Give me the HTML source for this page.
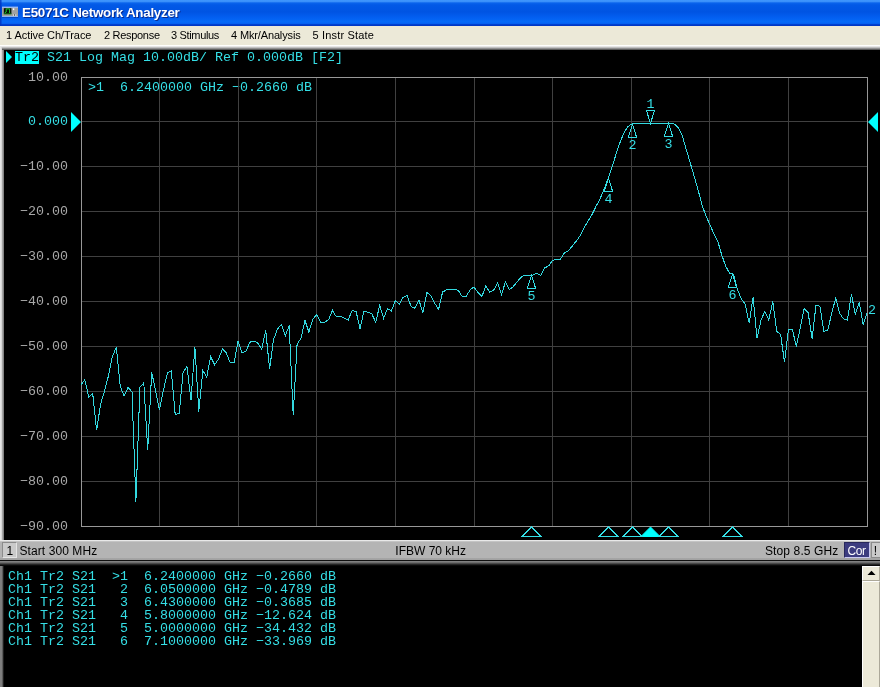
<!DOCTYPE html>
<html><head><meta charset="utf-8"><title>E5071C Network Analyzer</title>
<style>
html,body{margin:0;padding:0;}
body{width:880px;height:687px;overflow:hidden;background:#000;position:relative;font-family:"Liberation Sans",sans-serif;}
.mono,.yl,#menu,#status,#ttext{will-change:transform;}
div{position:absolute;box-sizing:border-box;white-space:pre;}
#title{left:0;top:0;width:880px;height:26px;background:linear-gradient(to bottom,#3f97fd 0px,#3a90fa 1.5px,#0a64ec 3px,#0259e6 5px,#0054e3 12px,#035ef0 17px,#056af8 22px,#0560f0 23.5px,#0040d0 24.5px,#0032c0 26px);}
#title .edge{left:0;top:0;width:2px;height:26px;background:linear-gradient(to right,#0034c0,rgba(0,60,200,0.3));}
#ttext{left:22px;top:4px;color:#fff;font-weight:bold;font-size:13.4px;line-height:18px;text-shadow:1px 1px 0 #0a2a8c;letter-spacing:-0.28px;}
#icon{left:2px;top:7px;width:16px;height:10px;background:#9a9c9a;border:1px solid #a8b4d0;}
#icon i{position:absolute;left:1px;top:1px;width:8px;height:6px;background:#1c241c;display:block;}
#icon b{position:absolute;left:2px;top:3px;width:6px;height:2px;background:#20b028;display:block;}
#icon u{position:absolute;left:11px;top:1px;width:1px;height:2px;background:#f0f0f0;display:block;}
#menu{left:0;top:26px;width:880px;height:19px;background:#ece9d8;font-size:11px;color:#000;}
#menu span{position:absolute;top:3px;line-height:13px;}
#sep{left:0;top:45px;width:880px;height:2px;background:linear-gradient(to bottom,#fffffa 0px,#ffffff 1px,#e8e8e8 1px,#e2e2e2 2px);}
#sep2{left:2px;top:47px;width:878px;height:3px;background:linear-gradient(to bottom,#d0d0d0 0px,#b0b0b0 1px,#9a9a9a 1px,#888 2px,#707070 2px,#4c4c4c 3px);}
#lb{left:0;top:47px;width:4px;height:513px;background:linear-gradient(to right,#e6e6e6 0px,#e6e6e6 1px,#dadada 1px,#d4d4d4 2px,#a8a8a8 2px,#a0a0a0 3px,#8a8a8a 3px,#7c7c7c 4px);}
.mono{font-family:"Liberation Mono",monospace;font-size:13.33px;line-height:14px;color:#35dfe6;letter-spacing:0px;}
.yl{left:0;width:68px;text-align:right;font-family:"Liberation Mono",monospace;font-size:13.33px;line-height:14px;color:#a8a8a8;}
.yl.cy{color:#35dfe6;}
#lb2{left:0;top:562px;width:4px;height:125px;background:linear-gradient(to right,#808080 0px,#7c7c7c 2px,#303030 3.2px,#000 4px);}
#hl{left:15px;top:51px;width:24px;height:13px;background:#00ffff;}
#tline{left:15px;top:51px;}
#tline b{font-weight:normal;color:#000;}
#mread{left:88px;top:81px;}
.row{left:8px;}
#status{left:0;top:540px;width:880px;height:20px;background:linear-gradient(to bottom,#e8e8e8 0px,#e8e8e8 1px,#c4c4c4 1px,#c4c4c4 2px,#b4b4b4 2px,#b4b4b4 17.5px,#a6a6a6 18px,#a0a0a0 20px);font-size:12px;color:#000;}
#status span{position:absolute;top:4px;line-height:14px;}
#sb1,#cor,#exc{will-change:transform;}
#sb1{left:2px;top:542px;width:15px;height:16px;background:#cacaca;border:1px solid #8c8c8c;border-right-color:#e4e4e4;border-bottom-color:#e4e4e4;}
#cor{left:844px;top:542px;width:26px;height:16px;background:#3c3c80;border:1px solid #28285c;border-right-color:#c8c8f0;border-bottom-color:#c8c8f0;}
#exc{left:871px;top:542px;width:12px;height:16px;background:#cacaca;border:1px solid #8c8c8c;}
#ssep{left:0;top:560px;width:880px;height:6px;background:linear-gradient(to bottom,#101010 0px,#101010 1px,#848484 1px,#7c7c7c 2px,#5c5c5c 3px,#343434 4px,#141414 5px,#000 6px);}
#scroll{left:862px;top:581px;width:18px;height:106px;background:#ece9d8;border-left:1px solid #fff;border-top:1px solid #fff;border-right:1px solid #aca899;}
#sbtn{left:862px;top:566px;width:18px;height:15px;background:#ece9d8;border:1px solid #fff;border-right-color:#aca899;border-bottom-color:#aca899;}
svg{position:absolute;left:0;top:0;}
</style></head><body>
<div id="title"><div class="edge"></div><svg width="22" height="22" viewBox="0 0 22 22" style="left:0;top:0"><rect x="2" y="7" width="16" height="10" fill="#a2a2a2"/><rect x="2" y="6.6" width="16" height="1.3" fill="#9cbcf4"/><rect x="2" y="16" width="16" height="1" fill="#8cb4f4"/><rect x="2" y="17" width="16" height="0.6" fill="#0a3cb0"/><rect x="3.8" y="8.2" width="7.6" height="6" fill="#081008"/><path d="M4.6,13 L6.2,12 L6.2,8.9 L9.6,8.9 L9.6,13" fill="none" stroke="#1cc82c" stroke-width="1"/><rect x="3.8" y="13.5" width="7.8" height="0.7" fill="#18a020"/><rect x="12.9" y="8.4" width="1.4" height="1.7" fill="#fff"/><rect x="13" y="14.5" width="1" height="1.2" fill="#ececec"/><rect x="15.2" y="14.5" width="1.1" height="1.2" fill="#ececec"/><rect x="14.3" y="14" width="0.7" height="2" fill="#585858"/></svg><div id="ttext">E5071C Network Analyzer</div></div>
<div id="menu"><span style="left:6px;letter-spacing:-0.06px">1 Active Ch/Trace</span><span style="left:104px;letter-spacing:-0.3px">2 Response</span><span style="left:171px;letter-spacing:-0.34px">3 Stimulus</span><span style="left:231px;letter-spacing:-0.14px">4 Mkr/Analysis</span><span style="left:312.5px;letter-spacing:0.17px">5 Instr State</span></div>
<div id="sep"></div><div id="lb"></div><div id="sep2"></div>
<div id="lb2"></div>
<div id="hl"></div>
<div id="tline" class="mono"><b>Tr2</b> S21 Log Mag 10.00dB/ Ref 0.000dB [F2]</div>
<div class="yl" style="top:71px">10.00</div><div class="yl cy" style="top:115px">0.000</div><div class="yl" style="top:160px">−10.00</div><div class="yl" style="top:205px">−20.00</div><div class="yl" style="top:250px">−30.00</div><div class="yl" style="top:295px">−40.00</div><div class="yl" style="top:340px">−50.00</div><div class="yl" style="top:385px">−60.00</div><div class="yl" style="top:430px">−70.00</div><div class="yl" style="top:475px">−80.00</div><div class="yl" style="top:520px">−90.00</div>
<div id="mread" class="mono">&gt;1  6.2400000 GHz −0.2660 dB</div>
<svg width="880" height="687" viewBox="0 0 880 687">
<g stroke="#404040" stroke-width="1" shape-rendering="crispEdges"><line x1="159.5" y1="77" x2="159.5" y2="526" /><line x1="238.5" y1="77" x2="238.5" y2="526" /><line x1="316.5" y1="77" x2="316.5" y2="526" /><line x1="395.5" y1="77" x2="395.5" y2="526" /><line x1="474.5" y1="77" x2="474.5" y2="526" /><line x1="552.5" y1="77" x2="552.5" y2="526" /><line x1="631.5" y1="77" x2="631.5" y2="526" /><line x1="709.5" y1="77" x2="709.5" y2="526" /><line x1="788.5" y1="77" x2="788.5" y2="526" /><line x1="81" y1="121.5" x2="868" y2="121.5" /><line x1="81" y1="166.5" x2="868" y2="166.5" /><line x1="81" y1="211.5" x2="868" y2="211.5" /><line x1="81" y1="256.5" x2="868" y2="256.5" /><line x1="81" y1="301.5" x2="868" y2="301.5" /><line x1="81" y1="346.5" x2="868" y2="346.5" /><line x1="81" y1="391.5" x2="868" y2="391.5" /><line x1="81" y1="436.5" x2="868" y2="436.5" /><line x1="81" y1="481.5" x2="868" y2="481.5" /></g>
<rect x="81.5" y="77.5" width="786" height="449" fill="none" stroke="#989898" stroke-width="1" shape-rendering="crispEdges"/>
<path d="M6,51 L12,57 L6,63 Z" fill="#00ffff"/>
<path d="M71,112 L81,122 L71,132 Z" fill="#00ffff"/>
<path d="M878,112 L868,122 L878,132 Z" fill="#00ffff"/>
<polyline points="80.9,384.8 84.8,379.8 88.8,397.2 92.7,393.5 96.6,430.4 100.6,404.0 104.5,391.0 108.4,376.0 112.3,357.0 116.3,347.2 120.2,386.0 124.1,396.2 128.1,387.2 132.0,392.2 135.9,501.5 139.9,387.2 143.8,382.9 147.7,449.8 151.7,372.2 155.6,391.0 159.5,409.8 163.5,390.0 167.4,372.9 171.3,371.0 175.2,414.5 179.2,413.1 183.1,372.2 187.0,366.6 191.0,400.4 194.9,346.6 198.8,411.6 202.8,370.4 206.7,377.2 210.6,356.6 214.6,364.8 218.5,359.0 222.4,349.1 226.3,352.9 230.3,362.9 234.2,362.2 238.1,341.0 242.1,352.9 246.0,351.0 249.9,342.2 253.9,341.0 257.8,343.2 261.7,349.1 265.7,330.4 269.6,369.3 273.5,339.8 277.5,329.1 281.4,324.5 285.3,336.0 289.2,325.4 293.2,415.4 297.1,344.1 301.0,338.5 305.0,320.4 308.9,332.2 312.8,319.1 316.8,314.5 320.7,322.2 324.6,322.2 328.6,319.8 332.5,310.4 336.4,317.0 340.3,316.2 344.3,318.2 348.2,320.0 352.1,310.4 356.1,311.6 360.0,328.5 363.9,311.4 367.9,312.2 371.8,313.8 375.7,322.2 379.7,305.4 383.6,318.2 387.5,308.5 391.4,311.0 395.4,300.4 399.3,304.1 403.2,297.2 407.2,295.4 411.1,306.6 415.0,308.2 419.0,300.4 422.9,312.5 426.8,292.5 430.8,295.4 434.7,303.2 438.6,309.3 442.6,292.0 446.5,289.9 450.4,289.1 454.3,289.1 458.3,290.4 462.2,296.6 466.1,296.6 470.1,289.8 474.0,287.0 477.9,292.2 481.9,296.6 485.8,286.0 489.7,292.0 493.7,290.0 497.6,283.2 501.5,294.5 505.4,282.2 509.4,289.5 513.3,286.6 517.2,281.6 521.2,277.2 525.1,275.0 529.0,276.0 533.0,275.0 536.9,273.2 540.8,275.4 544.8,267.9 548.7,265.8 552.6,260.4 556.6,259.1 560.5,259.1 564.4,252.9 568.3,250.8 572.3,246.0 576.2,241.2 580.1,235.8 584.1,227.9 588.0,221.0 591.9,214.8 595.9,206.6 599.8,199.5 603.7,190.0 607.7,179.8 611.6,168.5 615.5,156.0 619.4,144.1 623.4,134.1 627.3,127.2 631.2,124.1 635.2,123.2 639.1,123.1 643.0,123.1 647.0,123.1 650.9,123.1 654.8,123.1 658.8,123.1 662.7,123.1 666.6,123.1 670.5,123.1 674.5,124.1 678.4,127.9 682.3,136.0 686.3,149.7 690.2,162.7 694.1,176.0 698.1,190.0 702.0,205.0 705.9,215.7 709.9,224.9 713.8,233.5 717.7,241.0 721.7,254.8 725.6,266.0 729.5,273.2 733.4,274.1 737.4,289.6 741.3,298.7 745.2,304.2 749.2,323.2 753.1,297.0 757.0,338.2 761.0,320.1 764.9,311.4 768.8,320.1 772.8,301.4 776.7,331.4 780.6,334.5 784.5,362.0 788.5,329.2 792.4,329.5 796.3,346.4 800.3,327.6 804.2,308.5 808.1,312.6 812.1,338.5 816.0,305.1 819.9,306.4 823.9,331.4 827.8,330.1 831.7,313.2 835.7,298.2 839.6,313.2 843.5,318.9 847.4,320.1 851.4,294.1 855.3,314.5 859.2,302.0 863.2,324.5 867.1,312.6" fill="none" stroke="#33d9e0" stroke-width="1" stroke-linejoin="miter" shape-rendering="crispEdges"/>
<g fill="none" stroke="#35dfe6" stroke-width="1" shape-rendering="crispEdges"><path d="M650.5,123.5 L646.5,110.5 L654.5,110.5 Z" /><text x="650.5" y="108.0" class="mt">1</text><path d="M632.5,124.5 L628.5,137.0 L636.5,137.0 Z" /><text x="632.5" y="149.0" class="mt">2</text><path d="M668.5,123.5 L664.5,136.0 L672.5,136.0 Z" /><text x="668.5" y="148.0" class="mt">3</text><path d="M608.5,178.5 L604.5,191.0 L612.5,191.0 Z" /><text x="608.5" y="203.0" class="mt">4</text><path d="M531.5,275.5 L527.5,288.0 L535.5,288.0 Z" /><text x="531.5" y="300.0" class="mt">5</text><path d="M732.5,274.5 L728.5,287.0 L736.5,287.0 Z" /><text x="732.5" y="299.0" class="mt">6</text></g>
<path d="M650.5,527 L641.0,536.5 L660.0,536.5 Z" fill="#00ffff" stroke="#00ffff" stroke-width="1"/><path d="M632.5,527 L623.0,536.5 L642.0,536.5 Z" fill="none" stroke="#35dfe6" stroke-width="1" shape-rendering="crispEdges"/><path d="M668.5,527 L659.0,536.5 L678.0,536.5 Z" fill="none" stroke="#35dfe6" stroke-width="1" shape-rendering="crispEdges"/><path d="M608.5,527 L599.0,536.5 L618.0,536.5 Z" fill="none" stroke="#35dfe6" stroke-width="1" shape-rendering="crispEdges"/><path d="M531.5,527 L522.0,536.5 L541.0,536.5 Z" fill="none" stroke="#35dfe6" stroke-width="1" shape-rendering="crispEdges"/><path d="M732.5,527 L723.0,536.5 L742.0,536.5 Z" fill="none" stroke="#35dfe6" stroke-width="1" shape-rendering="crispEdges"/>
<text x="868" y="314" class="mt2">2</text>
<style>.mt{font-family:"Liberation Mono",monospace;font-size:13.33px;fill:#35dfe6;stroke:none;text-anchor:middle;}
.mt2{font-family:"Liberation Mono",monospace;font-size:13.33px;fill:#35dfe6;stroke:none;}</style>
</svg>
<div id="status"><span style="left:19.5px;letter-spacing:0.08px">Start 300 MHz</span><span style="left:395.3px">IFBW 70 kHz</span><span style="left:765px;letter-spacing:0.12px">Stop 8.5 GHz</span></div>
<div id="sb1"><span style="position:absolute;left:3.5px;top:1px;font-size:12px;line-height:14px">1</span></div>
<div id="cor"><span style="position:absolute;left:2.5px;top:1px;font-size:12px;line-height:14px;color:#fff;letter-spacing:-0.4px">Cor</span></div>
<div id="exc"><span style="position:absolute;left:1.8px;top:1px;font-size:12px;line-height:14px;color:#000">!</span></div>
<div id="ssep"></div>
<div class="mono row" style="top:570px">Ch1 Tr2 S21  &gt;1  6.2400000 GHz −0.2660 dB</div><div class="mono row" style="top:583px">Ch1 Tr2 S21   2  6.0500000 GHz −0.4789 dB</div><div class="mono row" style="top:596px">Ch1 Tr2 S21   3  6.4300000 GHz −0.3685 dB</div><div class="mono row" style="top:609px">Ch1 Tr2 S21   4  5.8000000 GHz −12.624 dB</div><div class="mono row" style="top:622px">Ch1 Tr2 S21   5  5.0000000 GHz −34.432 dB</div><div class="mono row" style="top:635px">Ch1 Tr2 S21   6  7.1000000 GHz −33.969 dB</div>
<div id="scroll"></div>
<div id="sbtn"></div>
<svg width="880" height="687" viewBox="0 0 880 687" style="pointer-events:none"><path d="M867.5,575 L871.5,570.7 L875.5,575 Z" fill="#000"/></svg>
</body></html>
